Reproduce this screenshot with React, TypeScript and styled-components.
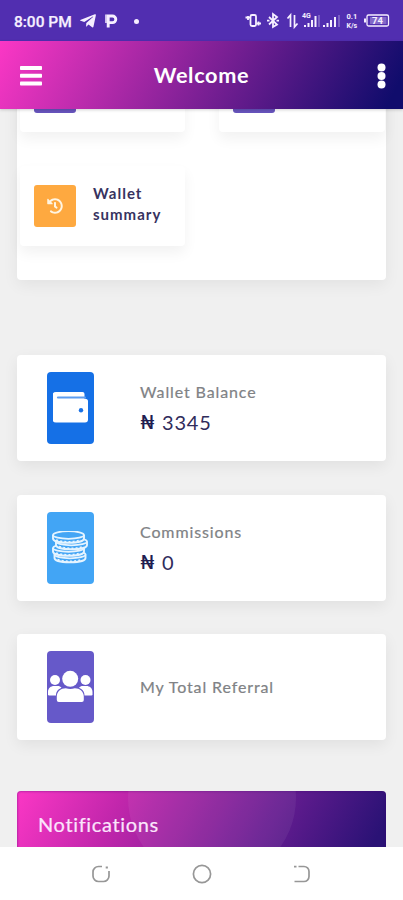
import React from 'react';
import styled, { createGlobalStyle } from 'styled-components';
import { FaHistory, FaTelegramPlane } from 'react-icons/fa';

const GlobalStyle = createGlobalStyle`
  *, *::before, *::after { box-sizing: border-box; }
  body { margin: 0; background: #f0f0f0; font-family: Lato, sans-serif; }
  svg { display: block; }
`;

const Screen = styled.div`
  width: 403px;
  height: 900px;
  display: flex;
  flex-direction: column;
  overflow: hidden;
  background: #f0f0f0;
`;

const StatusBar = styled.div`
  height: 41px;
  flex: none;
  display: flex;
  align-items: center;
  justify-content: space-between;
  padding: 1px 14px 0;
  background: #512eb0;
  color: #f6efff;
`;

const StatusLeft = styled.div`
  display: flex;
  align-items: center;
`;

const Clock = styled.span`
  font: 500 15.5px/20px Roboto, sans-serif;
  width: 65px;
  padding-top: 1px;
  white-space: nowrap;
  letter-spacing: -0.02px;
  -webkit-text-stroke: 0.25px currentColor;
`;

const AppBar = styled.header`
  height: 68px;
  flex: none;
  position: relative;
  z-index: 1;
  display: grid;
  grid-template-columns: 22px 1fr 9px;
  align-items: center;
  padding: 1px 17px 0 20px;
  color: #fff;
  background: linear-gradient(118deg, #fb37c5 0%, #100c6c 96%);
  box-shadow: 0 1px 3px rgba(0, 0, 0, 0.18);
`;

const Title = styled.h1`
  margin: 0;
  padding: 0 16px 2px 0;
  text-align: center;
  font: 700 21.7px/30px Lato, sans-serif;
  letter-spacing: 0.65px;
`;

const Viewport = styled.main`
  flex: 1;
  min-height: 0;
  overflow: hidden;
  padding: 0 17px;
`;

const ShortcutPanel = styled.section`
  margin-top: -91px;
  padding: 34px 1px 34px 3px;
  display: grid;
  grid-template-columns: 165px 166px;
  grid-auto-rows: 80px;
  gap: 34px;
  background: #fff;
  border-radius: 4px;
  box-shadow: 0 5px 16px rgba(0, 0, 0, 0.06);
  margin-bottom: 75px;
`;

const Shortcut = styled.div`
  display: flex;
  align-items: center;
  gap: 17px;
  padding-left: 14px;
  background: #fff;
  border-radius: 4px;
  box-shadow: 0 7px 14px rgba(0, 0, 0, 0.055);
`;

const ShortcutIcon = styled.div<{ $color: string }>`
  width: 42px;
  height: 42px;
  display: grid;
  place-items: center;
  border-radius: 3px;
  background: ${(p) => p.$color};
  color: #fff5e2;
`;

const ShortcutLabel = styled.span`
  width: 76px;
  font: 700 15px/21px Lato, sans-serif;
  letter-spacing: 1px;
  color: #37335f;
  padding-bottom: 4px;
`;

const StatList = styled.section`
  display: flex;
  flex-direction: column;
  gap: 33.5px;
`;

const StatCard = styled.article`
  height: 106px;
  display: flex;
  align-items: center;
  gap: 46px;
  padding-left: 30px;
  background: #fff;
  border-radius: 4px;
  box-shadow: 0 5px 15px rgba(0, 0, 0, 0.065);
`;

const StatIcon = styled.div<{ $color: string }>`
  width: 47px;
  height: 72px;
  display: grid;
  place-items: center;
  border-radius: 4px;
  background: ${(p) => p.$color};
  color: #fff;
`;

const StatText = styled.div`
  display: flex;
  flex-direction: column;
  gap: 6px;
`;

const StatLabel = styled.span`
  font: 400 16px/24px Lato, sans-serif;
  letter-spacing: 0.88px;
  color: #808285;
  -webkit-text-stroke: 0.2px currentColor;
`;

const StatValue = styled.span`
  display: flex;
  align-items: center;
  gap: 7px;
  margin-bottom: 1px;
  margin-top: -1px;
  font: 400 20px/26px Lato, sans-serif;
  letter-spacing: 0.8px;
  color: #302c5b;
`;

const Currency = styled.span`
  width: 15px;
  font: 700 18.5px/26px Lato, "Noto Sans", sans-serif;
  letter-spacing: 0;
  color: #211d50;
`;

const Notifications = styled.section`
  position: relative;
  overflow: hidden;
  height: 110px;
  margin-top: 51px;
  padding: 19px 21px;
  border-radius: 4px;
  background: linear-gradient(118deg, #fb37c5 0%, #c026ab 26%, #641c90 64%, #2a1275 90%);
  box-shadow: inset 0 0 2px 1px rgba(60, 0, 110, 0.3);
  &::after {
    content: '';
    position: absolute;
    left: 111px;
    top: -77px;
    width: 168px;
    height: 168px;
    border-radius: 50%;
    background: rgba(255, 255, 255, 0.06);
  }
`;

const NotificationsTitle = styled.h2`
  margin: 0;
  font: 400 20px/28px Lato, sans-serif;
  letter-spacing: 0.65px;
  color: #fbe4fc;
  -webkit-text-stroke: 0.2px currentColor;
`;

const NavBar = styled.nav`
  height: 53px;
  flex: none;
  display: flex;
  justify-content: center;
  align-items: center;
  gap: 80px;
  background: #fff;
  color: #979797;
`;

const ParkingIcon = () => (
  <svg width="13" height="16" viewBox="0 0 13 16" fill="none" stroke="currentColor">
    <path d="M3.200 14.500V3h4.300a3.200 3.200 0 0 1 0 6.600H3.500" strokeWidth="2.900" />
    <path d="M1 1.500v8.500" strokeWidth="1.500" />
  </svg>
);

const StatusGlyphs = styled.svg`
  flex: none;
  margin-right: -2px;
`;

const Gap = styled.span<{ $w: number }>`
  width: ${(p) => p.$w}px;
`;

const Bullet = styled.span`
  width: 5px;
  height: 5px;
  border-radius: 50%;
  background: currentColor;
`;

const StatusIcons = () => (
  <StatusGlyphs width="148" height="18" viewBox="243 12 148 18" fill="none" stroke="currentColor">
    <rect x="250.500" y="15" width="5.500" height="11" rx="1.500" strokeWidth="1.800" />
    <path d="M245.500 17.500h4.500M248 16v4M256.500 23.500h4.500M258.500 21.500v4" strokeWidth="1.800" />
    <path d="M269 17l8 7.500-4 2.500V14l4 3-8 7.500M267 20.700h2.500M276.500 20.700h2.500" strokeWidth="1.800" />
    <path d="M290.500 27V15l-3 3.500M294.500 15v12l3-3.500" strokeWidth="1.700" />
    <path d="M305 27v-2M308.500 27v-4M312 27v-7M315.500 27V16" strokeWidth="2" />
    <path d="M319 27V15M339 27V15" strokeWidth="1.500" opacity=".35" />
    <path d="M324 27v-2M327.500 27v-4M331 27v-7M335 27V17" strokeWidth="2" />
    <text x="302" y="18" fontFamily="Roboto" fontWeight="700" fontSize="7" fill="currentColor" stroke="none">4G</text>
    <text x="346.500" y="19" fontFamily="Roboto" fontWeight="700" fontSize="7.500" fill="currentColor" stroke="none">0.1</text>
    <text x="346.500" y="27.500" fontFamily="Roboto" fontWeight="700" fontSize="7" fill="currentColor" stroke="none">K/s</text>
    <rect x="367" y="15" width="21.500" height="11" rx="1.500" strokeWidth="1.300" />
    <path d="M365 18.500v4" strokeWidth="2" />
    <rect x="370" y="17" width="16.500" height="7" fill="currentColor" opacity=".3" stroke="none" />
    <text x="372" y="24" fontFamily="Roboto" fontWeight="700" fontSize="9.500" fill="currentColor" stroke="none">74</text>
  </StatusGlyphs>
);

const MenuIcon = () => (
  <svg width="22" height="20" viewBox="0 0 22 20" fill="currentColor">
    <rect y="0" width="22" height="4" rx=".8" />
    <rect y="7.800" width="22" height="4" rx=".8" />
    <rect y="15.600" width="22" height="4" rx=".8" />
  </svg>
);

const MoreIcon = () => (
  <svg width="9" height="26" viewBox="0 0 9 26" fill="currentColor">
    <circle cx="4.500" cy="4.500" r="4" />
    <circle cx="4.500" cy="13" r="4" />
    <circle cx="4.500" cy="21.500" r="4" />
  </svg>
);

const WalletIcon = () => (
  <svg width="36" height="32" viewBox="1 1 36 32">
    <path d="M4 1h26.500a2 2 0 0 1 2 2v5a2.500 2.500 0 0 1 3.500 2.500v18a3 3 0 0 1-3 3H4a3.500 3.500 0 0 1-3.500-3.500V4.500A3.500 3.500 0 0 1 4 1z" fill="#fff" />
    <path d="M6 6.500h27" stroke="#5d9df0" strokeWidth="2.200" strokeLinecap="round" />
    <circle cx="29" cy="19.300" r="2.200" fill="#1971e5" />
  </svg>
);

const coinRows = [
  { x: 18.5, y: 25.5 },
  { x: 17, y: 19 },
  { x: 20, y: 12.5 },
  { x: 17, y: 6 },
];

const CoinsIcon = () => (
  <svg width="37" height="34" viewBox="0.500 1 37 34" fill="#43a5f5" stroke="#e5f4ff">
    {coinRows.map(({ x, y }) => (
      <g key={y} transform={`translate(${x} ${y})`}>
        <path d="M-15.500-1v3.500C-15.500 8.200 15.500 8.200 15.500 2.500V-1" strokeWidth="1.900" />
        <ellipse cy="-1" rx="15.500" ry="3.800" strokeWidth="1.800" />
        <path d="M-12.500 4.200Q0 7.800 12.500 4.200" strokeWidth="2" strokeDasharray="2 2.200" fill="none" />
      </g>
    ))}
  </svg>
);

const PeopleIcon = () => (
  <svg width="47" height="34" viewBox="0 1 47 34" fill="#fff">
    <circle cx="8" cy="11" r="5" />
    <circle cx="38.500" cy="11" r="5" />
    <path d="M1 26v-3c0-4 3-6 6-6h3.500c2 0 3 .7 4 1.700C10.500 20.500 9 23 9 26.500H2zM45.500 26v-3c0-4-3-6-6-6H36c-2 0-3 .7-4 1.700 4 1.800 5.500 4.300 5.500 7.800h7z" />
    <circle cx="23.200" cy="9.800" r="8" />
    <path d="M9.800 31v-3.500c0-5 4-8.300 9-8.300 3 1 6 1 9 0 5 0 9 3.300 9 8.300V31a2 2 0 0 1-2 2h-23a2 2 0 0 1-2-2z" />
  </svg>
);

const RecentsIcon = () => (
  <svg width="20" height="20" viewBox="1 0 20 20" fill="none" stroke="currentColor" strokeWidth="1.700">
    <path d="M11 2.500H7.500A5.500 5.500 0 0 0 2 8v4a5.500 5.500 0 0 0 5.500 5.500h5A5.500 5.500 0 0 0 18 12V7" />
    <path d="M14.700 3.500h2.200" strokeWidth="2" />
  </svg>
);

const HomeIcon = () => (
  <svg width="20" height="20" viewBox="0 0 20 20" fill="none" stroke="currentColor" strokeWidth="1.700">
    <circle cx="10" cy="10" r="8.600" />
  </svg>
);

const BackIcon = () => (
  <svg width="20" height="20" viewBox="0 0 20 20" fill="none" stroke="currentColor" strokeWidth="1.700">
    <path d="M6.500 2.500H12A5 5 0 0 1 17 7.500v5a5 5 0 0 1-5 5H2.500M2 2.700h2.500" />
  </svg>
);

export default function App() {
  return (
    <>
      <GlobalStyle />
      <Screen>
        <StatusBar>
          <StatusLeft>
            <Clock>8:00 PM</Clock>
            <FaTelegramPlane size={18} />
            <Gap $w={8} />
            <ParkingIcon />
            <Gap $w={16} />
            <Bullet />
          </StatusLeft>
          <StatusIcons />
        </StatusBar>
        <AppBar>
          <MenuIcon />
          <Title>Welcome</Title>
          <MoreIcon />
        </AppBar>
        <Viewport>
          <ShortcutPanel>
            <Shortcut>
              <ShortcutIcon $color="#6754bd" />
            </Shortcut>
            <Shortcut>
              <ShortcutIcon $color="#6754bd" />
            </Shortcut>
            <Shortcut>
              <ShortcutIcon $color="#fea940">
                <FaHistory size={16} />
              </ShortcutIcon>
              <ShortcutLabel>Wallet summary</ShortcutLabel>
            </Shortcut>
          </ShortcutPanel>
          <StatList>
            <StatCard>
              <StatIcon $color="#1570e6"><WalletIcon /></StatIcon>
              <StatText>
                <StatLabel>Wallet Balance</StatLabel>
                <StatValue><Currency>₦</Currency>3345</StatValue>
              </StatText>
            </StatCard>
            <StatCard>
              <StatIcon $color="#42a5f5"><CoinsIcon /></StatIcon>
              <StatText>
                <StatLabel>Commissions</StatLabel>
                <StatValue><Currency>₦</Currency>0</StatValue>
              </StatText>
            </StatCard>
            <StatCard>
              <StatIcon $color="#6659c9"><PeopleIcon /></StatIcon>
              <StatText>
                <StatLabel>My Total Referral</StatLabel>
              </StatText>
            </StatCard>
          </StatList>
          <Notifications>
            <NotificationsTitle>Notifications</NotificationsTitle>
          </Notifications>
        </Viewport>
        <NavBar>
          <RecentsIcon />
          <HomeIcon />
          <BackIcon />
        </NavBar>
      </Screen>
    </>
  );
}
